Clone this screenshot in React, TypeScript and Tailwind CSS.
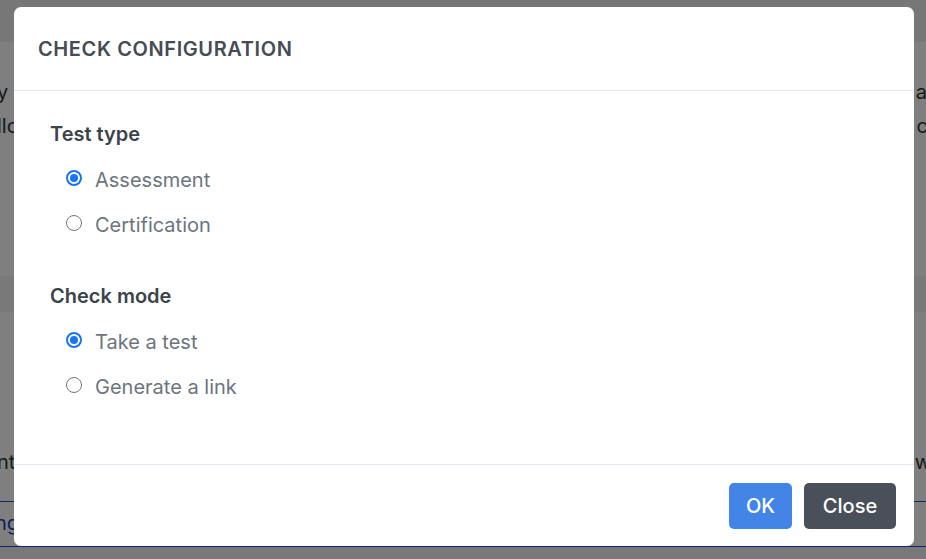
import React from "react";

function Radio({ checked, label }: { checked?: boolean; label: string }) {
  return (
    <label className="flex h-[45px] items-center pl-4">
      {checked ? (
        <span className="mb-[6px] flex h-4 w-4 items-center justify-center rounded-full border-2 border-[#1a73f0] bg-white">
          <span className="h-[8px] w-[8px] rounded-full bg-[#1a73f0]" />
        </span>
      ) : (
        <span className="mb-[6px] h-[16px] w-[16px] rounded-full border border-[#767676] bg-white" />
      )}
      <span className="ml-[13px] text-[20px] leading-[27px] text-[#6c757d]">{label}</span>
    </label>
  );
}

export default function App() {
  return (
    <div
      className="relative h-[559px] w-[926px] overflow-hidden bg-white"
      style={{ fontFamily: "Inter, 'Noto Sans', sans-serif" }}
    >
      {/* background page */}
      <div className="flex h-full flex-col text-[20px] text-[#333]">
        <div className="h-[42px] bg-[#eeeeee]" />
        <div className="flex justify-between pt-[37px] leading-[27px]">
          <span className="-ml-[3px]">y</span>
          <span className="-mr-[1px]">a</span>
        </div>
        <div className="flex justify-between pt-[7px] leading-[27px]">
          <span className="-ml-[3px]">llo</span>
          <span className="-mr-[2px]">c</span>
        </div>
        <div className="mt-[136px] h-[36px] bg-[#f3f3f3]" />
        <div className="flex justify-between pt-[137px] leading-[27px]">
          <span className="-ml-[3px]">nt</span>
          <span className="-mr-[5px]">w</span>
        </div>
        <div className="mt-[25px] border-t border-[#1d4ed8] pt-[8px] leading-[27px] text-[#1e40af]">
          <span className="-ml-[5px]">ng</span>
        </div>
        <div className="mt-[9px] border-t border-[#1d4ed8]" />
        <div className="flex-1 bg-[#f3f3f3]" />
      </div>
      {/* overlay */}
      <div className="absolute inset-0 bg-black/50" />
      {/* modal */}
      <div className="absolute left-[14px] top-[7px] flex h-[539px] w-[900px] flex-col rounded-[7px] bg-white">
        <div className="flex h-[84px] items-center border-b border-[#e2e8f0] pl-6">
          <h1 className="text-[20px] font-semibold uppercase tracking-[0.6px] text-[#464c54]">
            Check configuration
          </h1>
        </div>
        <div className="flex flex-1 flex-col pl-9 pt-[30px]">
          <div className="text-[20px] font-semibold leading-[27px] text-[#3d434a]">Test type</div>
          <div className="mt-[10px]">
            <Radio checked label="Assessment" />
            <Radio label="Certification" />
          </div>
          <div className="mt-[35px] text-[20px] font-semibold leading-[27px] text-[#3d434a]">Check mode</div>
          <div className="mt-[10px]">
            <Radio checked label="Take a test" />
            <Radio label="Generate a link" />
          </div>
        </div>
        <div className="flex h-[82px] items-center justify-end gap-3 border-t border-[#e2e8f0] pr-[18px]">
          <button className="h-[46px] w-[63px] rounded-[5px] bg-[#4285e6] text-[20px] font-medium text-white">
            OK
          </button>
          <button className="h-[46px] w-[92px] rounded-[5px] bg-[#4a5059] text-[20px] font-medium text-white">
            Close
          </button>
        </div>
      </div>
    </div>
  );
}
